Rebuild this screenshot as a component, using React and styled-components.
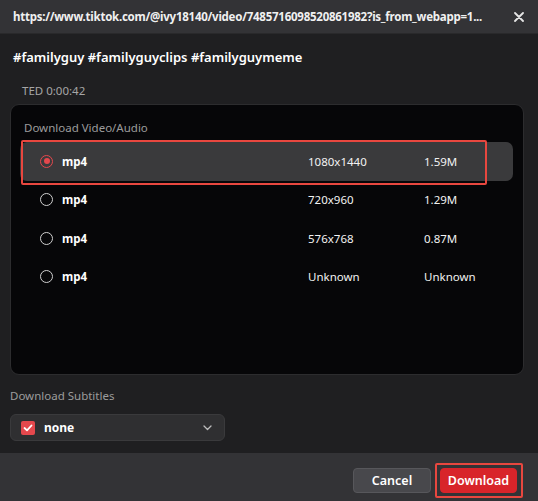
import React from 'react';
import styled, { createGlobalStyle } from 'styled-components';

const GlobalStyle = createGlobalStyle`
    html, body {
        margin: 0;
        padding: 0;
        background: #1f1f21;
    }
    body {
        font-family: "Noto Sans", "Liberation Sans", sans-serif;
        color: #f2f2f2;
    }
    * {
        box-sizing: border-box;
    }
`;

const StyledDialog = styled.div`
    width: 538px;
    height: 501px;
    display: flex;
    flex-direction: column;
    background: #1f1f21;
    overflow: hidden;
`;

const StyledHeader = styled.header`
    height: 34px;
    flex-shrink: 0;
    display: flex;
    align-items: center;
    justify-content: space-between;
    padding: 0 12px 0 13px;
    background: #333336;
    border-bottom: 1px solid #29292b;
`;

const StyledUrl = styled.span`
    font-size: 11.5px;
    letter-spacing: -0.25px;
    font-weight: 700;
    color: #f0f0f0;
    white-space: nowrap;
`;

const StyledClose = styled.button`
    width: 14px;
    height: 14px;
    padding: 0;
    border: none;
    background: none;
    display: flex;
    align-items: center;
    justify-content: center;
    color: #e6e6e6;
`;

const StyledBody = styled.main`
    flex: 1;
    display: flex;
    flex-direction: column;
    padding: 0 14px 0 10px;
`;

const StyledTags = styled.h1`
    margin: 14px 0 0 3px;
    font-size: 13px;
    line-height: 18px;
    font-weight: 600;
    color: #ffffff;
`;

const StyledDuration = styled.span`
    margin: 17px 0 0 12px;
    font-size: 11.5px;
    line-height: 16px;
    color: #a6a6a6;
`;

const StyledPanel = styled.section`
    margin-top: 5px;
    height: 271px;
    padding: 15px 10px 0 9px;
    background: #060608;
    border: 1px solid #2c2c2e;
    border-radius: 9px;
    display: flex;
    flex-direction: column;
`;

const StyledLabel = styled.span`
    margin-left: ${({ indent }) => indent || 0}px;
    margin-top: ${({ gap }) => gap || 0}px;
    font-size: 11.5px;
    line-height: 16px;
    color: #9c9c9c;
`;

const StyledList = styled.ul`
    list-style: none;
    margin: 6px 0 0;
    padding: 0;
`;

const StyledRow = styled.li`
    position: relative;
    height: 38.5px;
    display: grid;
    grid-template-columns: 22px 246px 116px 1fr;
    align-items: center;
    padding-left: 20px;
    border-radius: 7px;
    background: ${({ selected }) => (selected ? '#3a3a3c' : 'transparent')};
    font-size: 11.5px;
    color: #f2f2f2;
`;

const StyledHighlight = styled.span`
    position: absolute;
    left: 1px;
    top: -2px;
    width: 466px;
    height: 45px;
    border: 2px solid #e8473f;
    border-radius: 2px;
    pointer-events: none;
`;

const StyledRadio = styled.span`
    width: 13px;
    height: 13px;
    border-radius: 50%;
    border: 1.5px solid ${({ checked }) => (checked ? '#e5484d' : '#cfcfcf')};
    display: flex;
    align-items: center;
    justify-content: center;

    &::after {
        content: '';
        width: 6px;
        height: 6px;
        border-radius: 50%;
        background: ${({ checked }) => (checked ? '#e5484d' : 'transparent')};
    }
`;

const StyledFormat = styled.span`
    font-weight: 700;
    font-size: 11.5px;
    color: #ffffff;
`;

const StyledSelect = styled.div`
    margin-top: 10px;
    width: 215px;
    height: 27px;
    display: flex;
    align-items: center;
    padding: 0 12px 0 10px;
    background: #2f2f31;
    border: 1px solid #3a3a3c;
    border-radius: 6px;
`;

const StyledCheck = styled.span`
    width: 14px;
    height: 14px;
    border-radius: 2px;
    background: #e5484d;
    display: flex;
    align-items: center;
    justify-content: center;
`;

const StyledSelectValue = styled.span`
    margin-left: 9px;
    flex: 1;
    font-size: 12px;
    font-weight: 700;
    color: #ffffff;
`;

const StyledFooter = styled.footer`
    height: 48px;
    flex-shrink: 0;
    display: flex;
    justify-content: flex-end;
    align-items: flex-start;
    gap: 9px;
    padding: 15px 21px 0 0;
    background: #333336;
`;

const StyledButton = styled.button`
    position: relative;
    width: ${({ primary }) => (primary ? 77 : 78)}px;
    height: 25px;
    border-radius: 4px;
    border: 1px solid ${({ primary }) => (primary ? '#d8242a' : '#57575b')};
    background: ${({ primary }) => (primary ? '#d8242a' : '#48484c')};
    color: #ffffff;
    font-family: inherit;
    font-size: 12.5px;
    font-weight: 600;
    padding: 0;
`;

const StyledButtonHighlight = styled.span`
    position: absolute;
    left: -6px;
    top: -6px;
    right: -7px;
    bottom: -6px;
    border: 2px solid #e8473f;
    border-radius: 2px;
`;

const formats = [
    { name: 'mp4', res: '1080x1440', size: '1.59M' },
    { name: 'mp4', res: '720x960', size: '1.29M' },
    { name: 'mp4', res: '576x768', size: '0.87M' },
    { name: 'mp4', res: 'Unknown', size: 'Unknown' },
];

const App = () => {
    return (
        <StyledDialog>
            <GlobalStyle />
            <StyledHeader>
                <StyledUrl>https://www.tiktok.com/@ivy18140/video/7485716098520861982?is_from_webapp=1...</StyledUrl>
                <StyledClose>
                    <svg width="10" height="10" viewBox="0 0 10 10">
                        <path d="M1 1 L9 9 M9 1 L1 9" stroke="currentColor" strokeWidth="1.8" strokeLinecap="round" />
                    </svg>
                </StyledClose>
            </StyledHeader>
            <StyledBody>
                <StyledTags>#familyguy #familyguyclips #familyguymeme</StyledTags>
                <StyledDuration>TED 0:00:42</StyledDuration>
                <StyledPanel>
                    <StyledLabel indent={4}>Download Video/Audio</StyledLabel>
                    <StyledList>
                        {formats.map((f, i) => (
                            <StyledRow key={i} selected={i === 0}>
                                <StyledRadio checked={i === 0} />
                                <StyledFormat>{f.name}</StyledFormat>
                                <span>{f.res}</span>
                                <span>{f.size}</span>
                                {i === 0 && <StyledHighlight />}
                            </StyledRow>
                        ))}
                    </StyledList>
                </StyledPanel>
                <StyledLabel gap={13}>Download Subtitles</StyledLabel>
                <StyledSelect>
                    <StyledCheck>
                        <svg width="10" height="8" viewBox="0 0 10 8">
                            <path d="M1.5 4 L4 6.3 L8.5 1.5" fill="none" stroke="#fff" strokeWidth="1.8" strokeLinecap="round" strokeLinejoin="round" />
                        </svg>
                    </StyledCheck>
                    <StyledSelectValue>none</StyledSelectValue>
                    <svg width="9" height="6" viewBox="0 0 9 6">
                        <path d="M1 1 L4.5 4.5 L8 1" fill="none" stroke="#bdbdbd" strokeWidth="1.3" strokeLinecap="round" strokeLinejoin="round" />
                    </svg>
                </StyledSelect>
            </StyledBody>
            <StyledFooter>
                <StyledButton>Cancel</StyledButton>
                <StyledButton primary>
                    Download
                    <StyledButtonHighlight />
                </StyledButton>
            </StyledFooter>
        </StyledDialog>
    );
};

export default App;
